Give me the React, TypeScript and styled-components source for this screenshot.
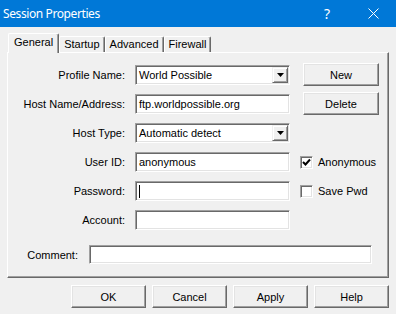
import React from "react";
import styled, { createGlobalStyle } from "styled-components";

const GlobalStyle = createGlobalStyle`
  body {
    margin: 0;
    background: #f0f0f0;
    font-family: "Liberation Sans", Arial, sans-serif;
    font-size: 11px;
    color: #000;
  }
`;

const Window = styled.div`
  width: 396px;
  height: 314px;
  background: #f0f0f0;
  overflow: hidden;
  display: flex;
  flex-direction: column;
`;

const TitleBar = styled.div`
  height: 27px;
  background: #0078d7;
  color: #fff;
  display: flex;
  align-items: center;
  padding-left: 3px;
  font-family: "Noto Sans", "Open Sans", sans-serif;
  font-size: 12px;
`;

const Title = styled.div`
  flex: 1;
  letter-spacing: -0.4px;
`;

const TitleButton = styled.div`
  width: 46px;
  height: 27px;
  display: flex;
  align-items: center;
  justify-content: center;
  font-size: 14px;
`;

const Content = styled.div`
  padding: 6px 7px 0 7px;
`;

const TabStrip = styled.div`
  display: flex;
  align-items: flex-end;
  height: 20px;
  padding-left: 1px;
  margin-bottom: -1px;
  position: relative;
  z-index: 1;
`;

const Tab = styled.div<{ $active?: boolean }>`
  box-sizing: border-box;
  height: ${(p) => (p.$active ? "20px" : "16px")};
  margin-bottom: ${(p) => (p.$active ? "0" : "1px")};
  padding: ${(p) => (p.$active ? "2px 5px 0 5px" : "1px 4px 0 4px")};
  background: #f0f0f0;
  border-top: 1px solid #fff;
  border-left: 1px solid #fff;
  border-right: 1px solid #696969;
  box-shadow: inset -1px 0 #a0a0a0;
  border-radius: 2px 2px 0 0;
  white-space: nowrap;
`;

const Panel = styled.div`
  box-sizing: border-box;
  height: 226px;
  border-top: 1px solid #fff;
  border-left: 1px solid #fff;
  border-right: 1px solid #696969;
  border-bottom: 1px solid #696969;
  box-shadow: inset -1px -1px #a0a0a0;
  padding-top: 12px;
`;

const FormGrid = styled.div`
  display: grid;
  grid-template-columns: 117px 155px 78px;
  grid-auto-rows: 20px;
  column-gap: 10px;
  row-gap: 9px;
`;

const Label = styled.div`
  justify-self: end;
  align-self: center;
  white-space: nowrap;
`;

const Field = styled.div`
  box-sizing: border-box;
  height: ${(p: { $h?: number }) => p.$h ?? 20}px;
  background: #fff;
  border: 1px solid;
  border-color: #a0a0a0 #fff #fff #a0a0a0;
  box-shadow: inset 1px 1px #696969, inset -1px -1px #e3e3e3;
  display: flex;
  align-items: center;
  padding-left: 3px;
  white-space: nowrap;
  overflow: hidden;
`;

const ComboText = styled.div`
  flex: 1;
`;

const DropButton = styled.div`
  box-sizing: border-box;
  width: 16px;
  height: 16px;
  margin-right: 1px;
  background: #f0f0f0;
  border: 1px solid;
  border-color: #f0f0f0 #696969 #696969 #f0f0f0;
  box-shadow: inset 1px 1px #fff, inset -1px -1px #a0a0a0;
  display: flex;
  align-items: center;
  justify-content: center;
`;

const Caret = styled.div`
  width: 1px;
  height: 13px;
  background: #000;
`;

const Button = styled.div<{ $w?: number }>`
  box-sizing: border-box;
  width: ${(p) => p.$w ?? 75}px;
  height: 23px;
  background: #f0f0f0;
  border: 1px solid;
  border-color: #fff #696969 #696969 #fff;
  box-shadow: inset -1px -1px #a0a0a0, inset 1px 1px #e3e3e3;
  display: flex;
  align-items: center;
  justify-content: center;
`;

const SideButton = styled(Button)`
  align-self: start;
  margin: -2px 0 0 3px;
`;

const CheckRow = styled.label`
  display: flex;
  align-items: center;
  gap: 5px;
  white-space: nowrap;
`;

const CheckBox = styled.div`
  box-sizing: border-box;
  width: 13px;
  height: 13px;
  background: #fff;
  border: 1px solid;
  border-color: #a0a0a0 #fff #fff #a0a0a0;
  box-shadow: inset 1px 1px #696969, inset -1px -1px #e3e3e3;
  display: flex;
  align-items: center;
  justify-content: center;
`;

const CommentRow = styled.div`
  display: grid;
  grid-template-columns: 70px 283px;
  column-gap: 11px;
  margin-top: 15px;
  align-items: center;
`;

const ButtonBar = styled.div`
  display: flex;
  justify-content: flex-end;
  gap: 6px;
  padding-top: 7px;
`;

const Arrow = () => (
  <svg width="7" height="4" viewBox="0 0 7 4">
    <polygon points="0,0 7,0 3.5,4" fill="#000" />
  </svg>
);

const Check = () => (
  <svg width="9" height="9" viewBox="0 0 9 9">
    <polyline points="1,4 3.5,6.5 8,1.5" fill="none" stroke="#000" strokeWidth="2" />
  </svg>
);

const Combo = ({ value }: { value: string }) => (
  <Field>
    <ComboText>{value}</ComboText>
    <DropButton>
      <Arrow />
    </DropButton>
  </Field>
);

const App = () => {
  return (
    <>
      <GlobalStyle />
      <Window>
        <TitleBar>
          <Title>Session Properties</Title>
          <TitleButton>?</TitleButton>
          <TitleButton>
            <svg width="11" height="11" viewBox="0 0 11 11">
              <path d="M0.5 0.5 L10.5 10.5 M10.5 0.5 L0.5 10.5" stroke="#fff" strokeWidth="1" />
            </svg>
          </TitleButton>
        </TitleBar>
        <Content>
          <TabStrip>
            <Tab $active>General</Tab>
            <Tab>Startup</Tab>
            <Tab>Advanced</Tab>
            <Tab>Firewall</Tab>
          </TabStrip>
          <Panel>
            <FormGrid>
              <Label>Profile Name:</Label>
              <Combo value="World Possible" />
              <SideButton $w={76}>New</SideButton>

              <Label>Host Name/Address:</Label>
              <Field>ftp.worldpossible.org</Field>
              <SideButton $w={76}>Delete</SideButton>

              <Label>Host Type:</Label>
              <Combo value="Automatic detect" />
              <div />

              <Label>User ID:</Label>
              <Field>anonymous</Field>
              <CheckRow>
                <CheckBox>
                  <Check />
                </CheckBox>
                Anonymous
              </CheckRow>

              <Label>Password:</Label>
              <Field>
                <Caret />
              </Field>
              <CheckRow>
                <CheckBox />
                Save Pwd
              </CheckRow>

              <Label>Account:</Label>
              <Field />
              <div />
            </FormGrid>
            <CommentRow>
              <Label>Comment:</Label>
              <Field $h={19} />
            </CommentRow>
          </Panel>
          <ButtonBar>
            <Button>OK</Button>
            <Button>Cancel</Button>
            <Button>Apply</Button>
            <Button>Help</Button>
          </ButtonBar>
        </Content>
      </Window>
    </>
  );
};

export default App;
